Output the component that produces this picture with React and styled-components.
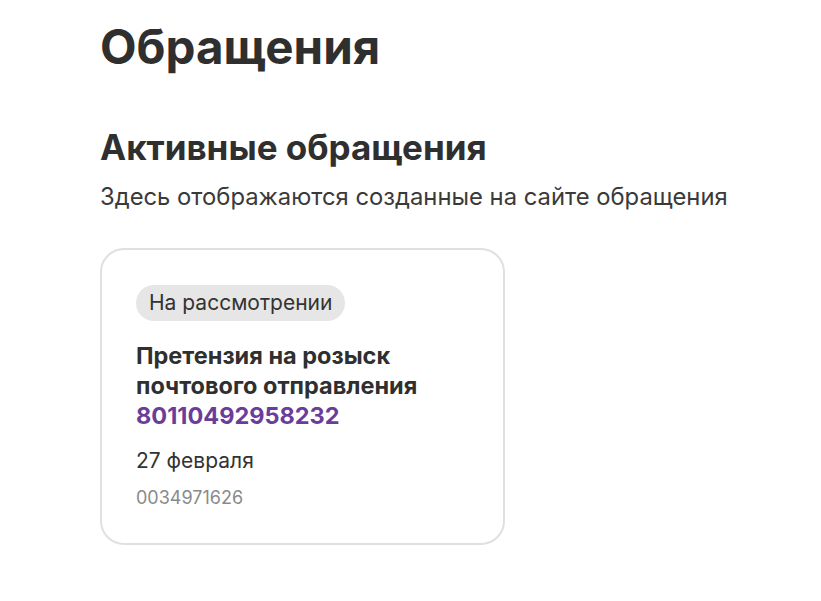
import styled, { createGlobalStyle } from "styled-components";

const Global = createGlobalStyle`
  body {
    margin: 0;
    background: #fff;
    font-family: Inter, "Noto Sans", sans-serif;
    color: #2f2f2f;
  }
`;

const Page = styled.div`
  padding: 19px 40px 40px 100px;
`;

const Title = styled.h1`
  margin: 0;
  font-size: 47.5px;
  font-weight: 700;
  line-height: 56px;
`;

const SectionTitle = styled.h2`
  margin: 52px 0 0;
  font-size: 35px;
  font-weight: 700;
  line-height: 40px;
`;

const Subtitle = styled.p`
  margin: 14px 0 0;
  font-size: 23.8px;
  line-height: 32px;
  color: #3a3a3a;
  white-space: nowrap;
`;

const Card = styled.div`
  margin-top: 35px;
  width: 405px;
  box-sizing: border-box;
  border: 2px solid #e0e0e0;
  border-radius: 24px;
  padding: 35px 34px 33px;
`;

const Chip = styled.span`
  display: inline-block;
  background: #e6e6e6;
  border-radius: 18px;
  padding: 0 13px;
  height: 36px;
  line-height: 36px;
  font-size: 21px;
  color: #333;
`;

const ClaimTitle = styled.div`
  margin-top: 20px;
  font-size: 23.5px;
  font-weight: 700;
  line-height: 30px;
  color: #2f2f2f;
`;

const Track = styled.div`
  font-size: 23.5px;
  font-weight: 700;
  line-height: 30px;
  color: #6a3d9a;
`;

const DateText = styled.div`
  margin-top: 16px;
  font-size: 21px;
  line-height: 28px;
  color: #333;
`;

const Code = styled.div`
  margin-top: 11px;
  font-size: 18px;
  line-height: 24px;
  color: #8a8a8a;
`;

export default function App() {
  return (
    <>
      <Global />
      <Page>
        <Title>Обращения</Title>
        <SectionTitle>Активные обращения</SectionTitle>
        <Subtitle>Здесь отображаются созданные на сайте обращения</Subtitle>
        <Card>
          <Chip>На рассмотрении</Chip>
          <ClaimTitle>
            Претензия на розыск
            <br />
            почтового отправления
          </ClaimTitle>
          <Track>80110492958232</Track>
          <DateText>27 февраля</DateText>
          <Code>0034971626</Code>
        </Card>
      </Page>
    </>
  );
}
